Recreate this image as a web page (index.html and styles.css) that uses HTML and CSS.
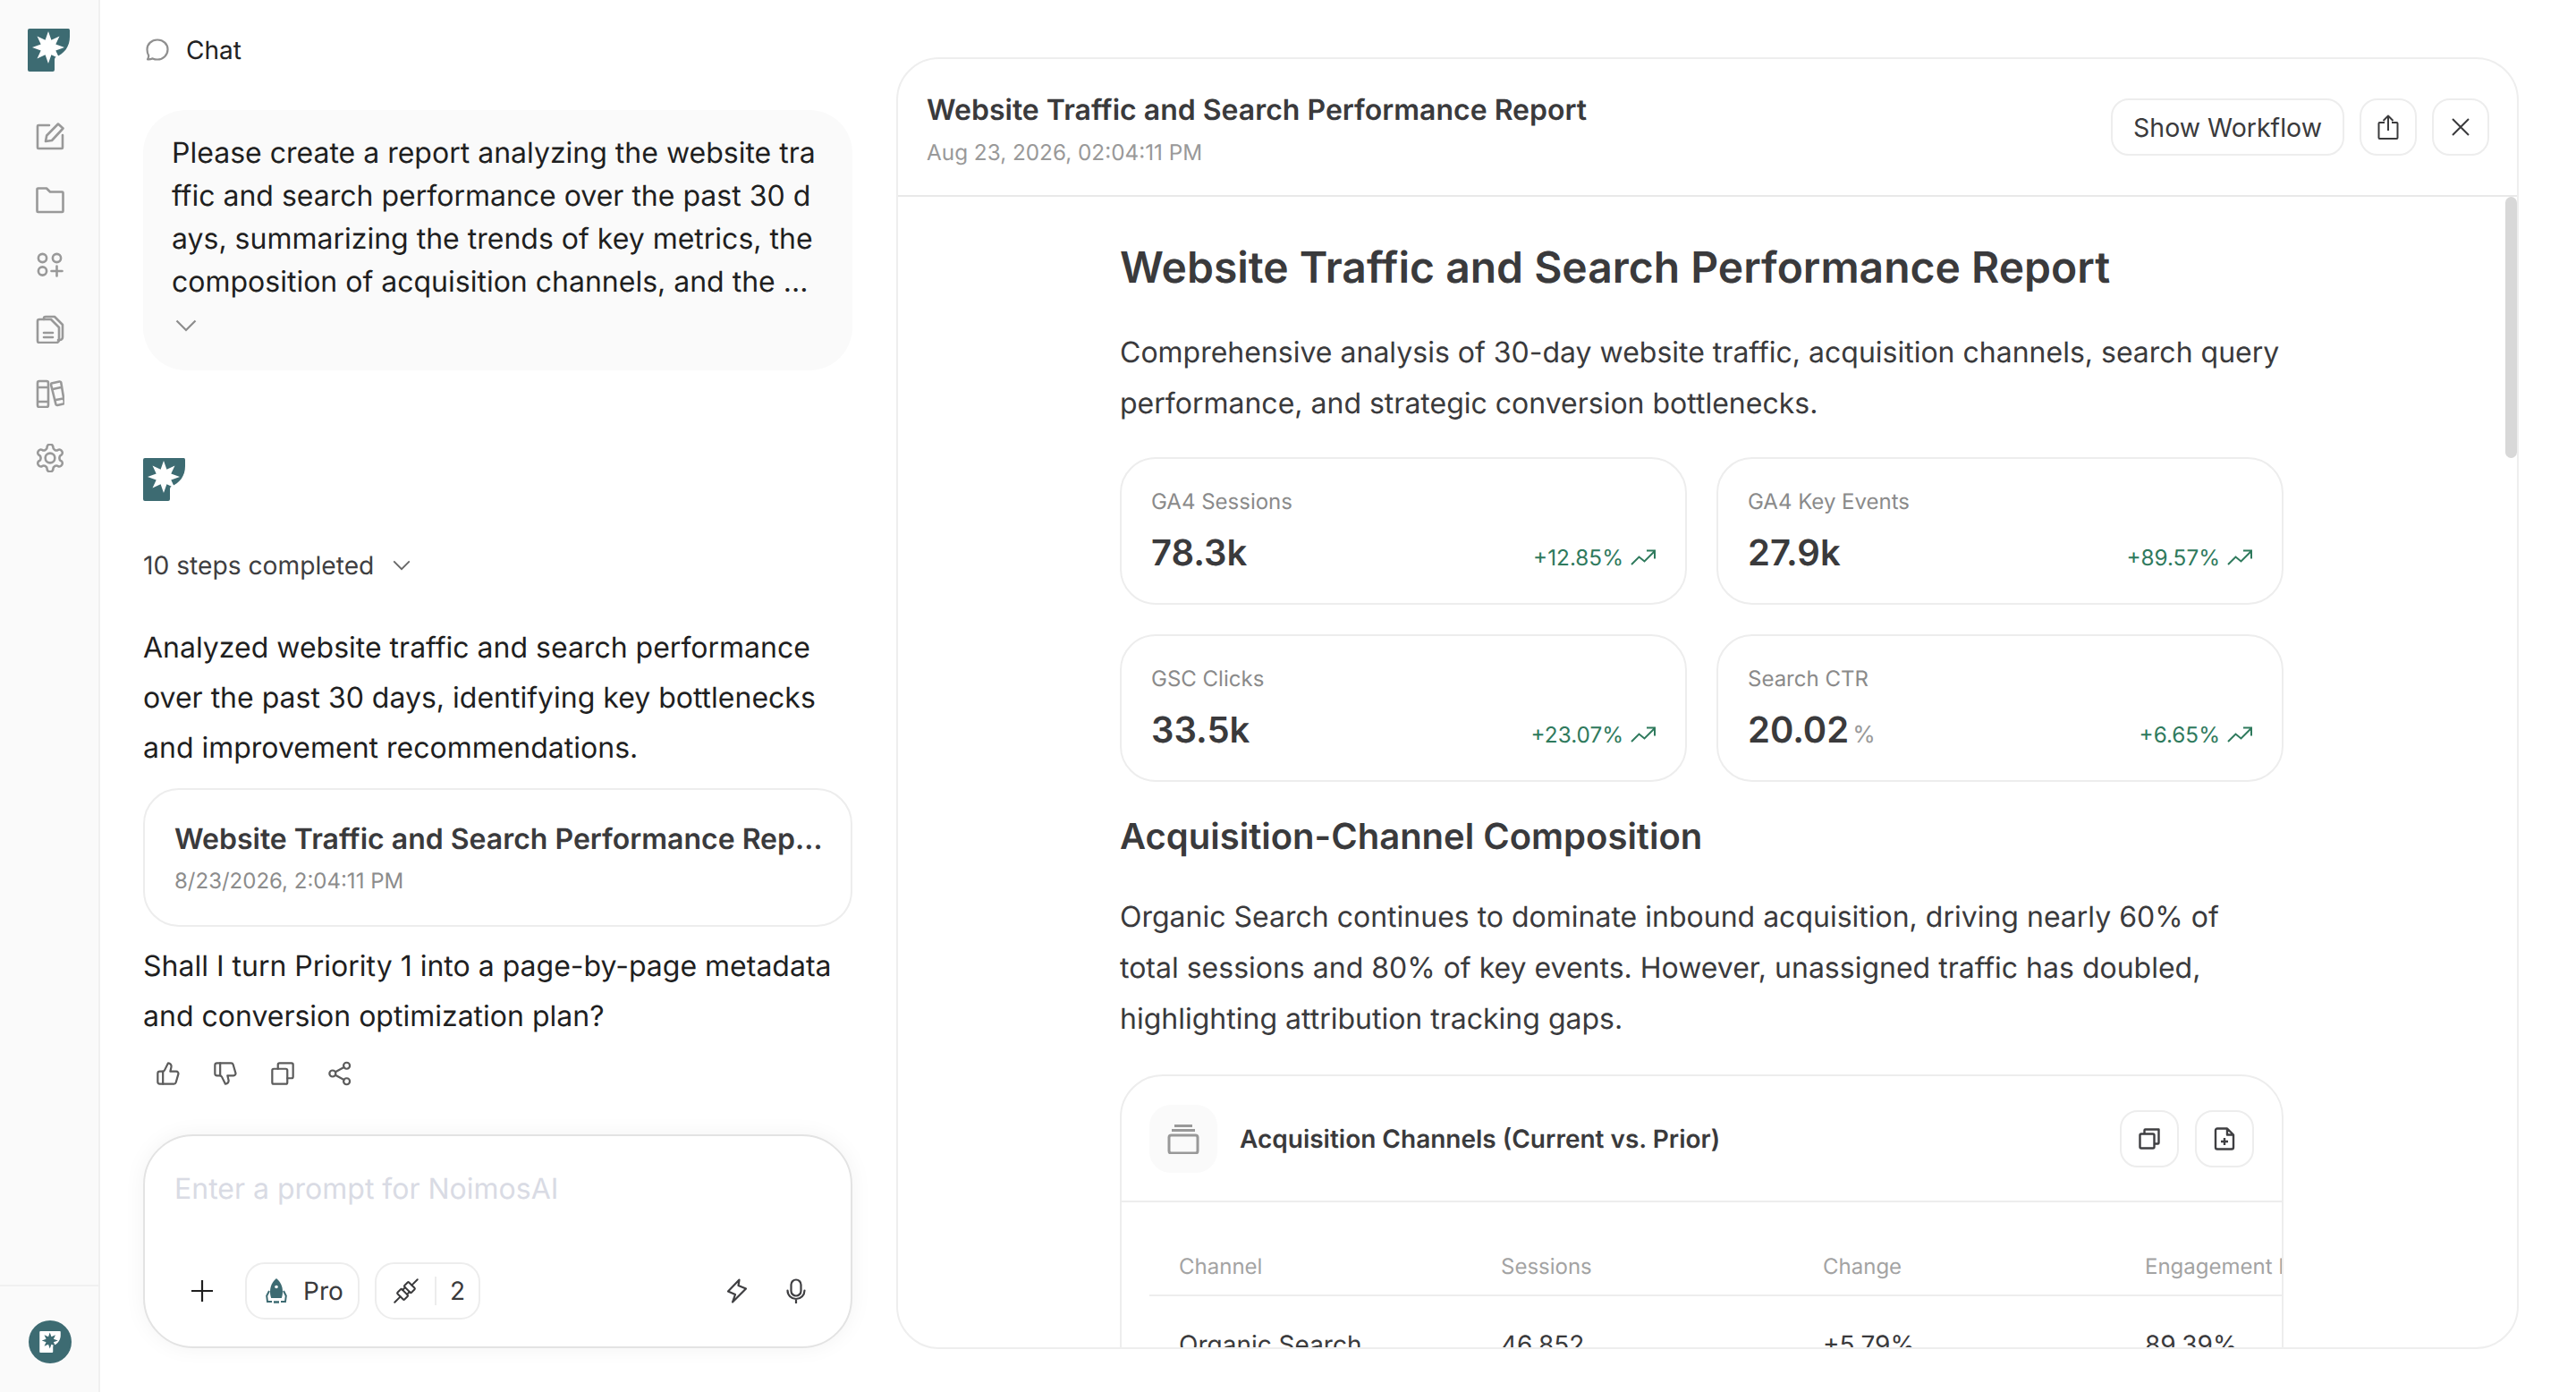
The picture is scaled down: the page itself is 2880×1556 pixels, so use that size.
FILE: index.html
```html
<!DOCTYPE html>
<html lang="en">
<head>
<meta charset="utf-8">
<title>NoimosAI Chat</title>
<link rel="stylesheet" href="styles.css">
</head>
<body>
<svg class="defs" width="0" height="0" aria-hidden="true">
  <defs>
    <symbol id="logo" viewBox="0 0 47 48">
      <path d="M2 0H45.500Q47 0 47 2V9C47 20 41 28 31 32Q30 33 30 35V46Q30 48 28 48H2Q0 48 0 46V2Q0 0 2 0Z" fill="currentColor"/>
      <polygon transform="translate(23 21)" fill="#fff" points="18,0 8.300,3.400 12.500,12.500 3.400,8.300 0,18 -3.400,8.300 -12.500,12.500 -8.300,3.400 -18,0 -8.300,-3.400 -12.500,-12.500 -3.400,-8.300 0,-18 3.400,-8.300 12.500,-12.500 8.300,-3.400"/>
    </symbol>
    <symbol id="trend" viewBox="0 0 28 18">
      <path d="M1 17 9.500 8.500 15.500 13.500 27 2M18 1.500H27V10.500" fill="none" stroke="currentColor" stroke-width="2"/>
    </symbol>
    <symbol id="chev" viewBox="0 0 24 14">
      <path d="M1.500 1.500 12 12 22.500 1.500" fill="none" stroke="currentColor" stroke-width="2.200"/>
    </symbol>
  </defs>
</svg>
<div class="app">
  <aside class="rail">
    <svg class="rail-logo"><use href="#logo"/></svg>
    <nav class="rail-nav">
      <svg class="rail-icon" viewBox="0 0 32 32"><path d="M15 4H3a1 1 0 0 0-1 1v24a1 1 0 0 0 1 1h26a1 1 0 0 0 1-1V15"/><path d="M11 22l1.200-6.500L25 2.500l5.500 5L18 21z"/></svg>
      <svg class="rail-icon" viewBox="0 0 32 32"><path d="M1.500 6.500a1 1 0 0 1 1-1H12l4 4h13.500a1 1 0 0 1 1 1V31a1 1 0 0 1-1 1h-27a1 1 0 0 1-1-1z" transform="translate(0 -3)"/></svg>
      <svg class="rail-icon" viewBox="0 0 32 32"><circle cx="7.500" cy="8.500" r="4.600"/><circle cx="23.500" cy="8.500" r="4.600"/><circle cx="7.500" cy="23" r="4.600"/><path d="M23.500 17.500v11M17.500 23h12"/></svg>
      <svg class="rail-icon" viewBox="0 0 32 32"><path d="M9 5V4a2 2 0 0 1 2-2h10l9 9v14a3 3 0 0 1-3 3h-2"/><path d="M4 5h13l9 9v14a3 3 0 0 1-3 3H4a2 2 0 0 1-2-2V7a2 2 0 0 1 2-2zM9 20h10M9 25h10"/></svg>
      <svg class="rail-icon" viewBox="0 0 32 32"><path d="M2 4a2 2 0 0 1 2-2h8a2 2 0 0 1 2 2v25a2 2 0 0 1-2 2H4a2 2 0 0 1-2-2zM2 9h12M2 25h12"/><path d="M17.500 4.500l9-2a1.500 1.500 0 0 1 1.800 1.200l3.600 22a1.500 1.500 0 0 1-1.200 1.800l-6.500 1.500a1.500 1.500 0 0 1-1.800-1.200L17 6zM19 11l9-2M22.500 23l8-1.500"/></svg>
      <svg class="rail-icon" viewBox="1.500 1.500 21 21"><g stroke-width="1.700"><path d="M12.220 2h-.44a2 2 0 0 0-2 2v.18a2 2 0 0 1-1 1.730l-.43.250a2 2 0 0 1-2 0l-.15-.08a2 2 0 0 0-2.730.730l-.22.380a2 2 0 0 0 .730 2.730l.15.100a2 2 0 0 1 1 1.720v.510a2 2 0 0 1-1 1.740l-.15.090a2 2 0 0 0-.730 2.730l.22.380a2 2 0 0 0 2.730.730l.15-.08a2 2 0 0 1 2 0l.43.250a2 2 0 0 1 1 1.730V20a2 2 0 0 0 2 2h.44a2 2 0 0 0 2-2v-.18a2 2 0 0 1 1-1.730l.43-.25a2 2 0 0 1 2 0l.15.080a2 2 0 0 0 2.730-.730l.22-.39a2 2 0 0 0-.730-2.730l-.15-.08a2 2 0 0 1-1-1.740v-.5a2 2 0 0 1 1-1.740l.15-.09a2 2 0 0 0 .730-2.730l-.22-.38a2 2 0 0 0-2.730-.730l-.15.080a2 2 0 0 1-2 0l-.43-.25a2 2 0 0 1-1-1.730V4a2 2 0 0 0-2-2z"/><circle cx="12" cy="12" r="3.500"/></g></svg>
    </nav>
    <div class="rail-foot">
      <div class="avatar"><svg class="avatar-logo" viewBox="0 0 47 48"><path d="M2 0H45.500Q47 0 47 2V9C47 20 41 28 31 32Q30 33 30 35V46Q30 48 28 48H2Q0 48 0 46V2Q0 0 2 0Z" fill="#fff"/><polygon transform="translate(23 21)" fill="#3d6b72" points="18,0 8.300,3.400 12.500,12.500 3.400,8.300 0,18 -3.400,8.300 -12.500,12.500 -8.300,3.400 -18,0 -8.300,-3.400 -12.500,-12.500 -3.400,-8.300 0,-18 3.400,-8.300 12.500,-12.500 8.300,-3.400"/></svg></div>
    </div>
  </aside>

  <section class="chat">
    <header class="chat-head">
      <svg class="chat-head-icon" viewBox="0 0 26 26"><path d="M13 1.500c6.600 0 11.500 4.700 11.500 10.800S19.600 23.500 13 23.500c-2 0-3.800-.4-5.300-1.100-1.800.7-3.700 1.100-5.700.9.800-1.300 1.300-2.800 1.200-4.100C1.900 17.100 1.500 14.700 1.500 12.300 1.500 6.200 6.400 1.500 13 1.500z"/></svg>
      <span>Chat</span>
    </header>
    <div class="bubble">
      <p class="bubble-text">Please create a report analyzing the website traffic and search performance over the past 30 days, summarizing the trends of key metrics, the composition of acquisition channels, and the ...</p>
      <svg class="bubble-chev"><use href="#chev"/></svg>
    </div>
    <svg class="answer-logo"><use href="#logo"/></svg>
    <div class="steps"><span>10 steps completed</span><svg class="steps-chev"><use href="#chev"/></svg></div>
    <p class="answer">Analyzed website traffic and search performance over the past 30 days, identifying key bottlenecks and improvement recommendations.</p>
    <div class="artifact">
      <div class="artifact-title">Website Traffic and Search Performance Report</div>
      <div class="artifact-date">8/23/2026, 2:04:11 PM</div>
    </div>
    <p class="answer follow">Shall I turn Priority 1 into a page-by-page metadata and conversion optimization plan?</p>
    <div class="actions">
      <svg class="action" viewBox="0 0 24 24"><path d="M7 10v12"/><path d="M15 5.880 14 10h5.830a2 2 0 0 1 1.920 2.560l-2.330 8A2 2 0 0 1 17.500 22H4a2 2 0 0 1-2-2v-8a2 2 0 0 1 2-2h2.760a2 2 0 0 0 1.790-1.110L12 2a3.130 3.130 0 0 1 3 3.880Z"/></svg>
      <svg class="action" viewBox="0 0 24 24"><path d="M7 14V2"/><path d="M15 18.120 14 14h5.830a2 2 0 0 0 1.920-2.560l-2.330-8A2 2 0 0 0 17.500 2H4a2 2 0 0 0-2 2v8a2 2 0 0 0 2 2h2.760a2 2 0 0 1 1.790 1.110L12 22a3.130 3.130 0 0 0 3-3.880Z"/></svg>
      <svg class="action" viewBox="0 0 24 24"><rect x="2" y="7.500" width="14.500" height="14.500" rx="1.500"/><path d="M7.500 7.500V3.500A1.500 1.500 0 0 1 9 2h11.500A1.500 1.500 0 0 1 22 3.500V15a1.500 1.500 0 0 1-1.500 1.500h-4"/></svg>
      <svg class="action" viewBox="0 0 24 24"><circle cx="18.500" cy="4.500" r="3"/><circle cx="5" cy="12" r="3"/><circle cx="18.500" cy="19.500" r="3"/><path d="M7.700 13.500l8.200 4.500M15.900 6l-8.200 4.500"/></svg>
    </div>
    <div class="composer">
      <div class="placeholder">Enter a prompt for NoimosAI</div>
      <div class="composer-bar">
        <svg class="plus" viewBox="0 0 24 24"><path d="M12 0v24M0 12h24"/></svg>
        <div class="chip chip-pro">
          <svg class="rocket" viewBox="0 0 24 28"><path d="M12 0C7.500 3.500 5 9 5 15c0 2.600.5 5 1.200 7h11.600c.7-2 1.200-4.400 1.200-7 0-6-2.500-11.500-7-15z" fill="#3d6b72"/><circle cx="12" cy="9.500" r="1.800" fill="#fff"/><path d="M4 14 1.200 19.500 2 26h5M20 14l2.800 5.500L22 26h-5" fill="none" stroke="#3d6b72" stroke-width="2"/><path d="M9 26.500h6" stroke="#3d6b72" stroke-width="2.500"/></svg>
          <span>Pro</span>
        </div>
        <div class="chip chip-tools">
          <svg class="plug" viewBox="0 0 28 28"><g transform="rotate(-45 14 14)"><path d="M-4 14H5M23 14h9M12 10.500h4M12 17.500h4"/><rect x="5" y="8.500" width="7" height="11" rx="1"/><rect x="16" y="8.500" width="7" height="11" rx="1"/></g></svg>
          <i class="chip-sep"></i>
          <span>2</span>
        </div>
        <div class="composer-right">
          <svg class="bolt" viewBox="0 0 24 28"><path d="M14.500 1.500 2 14.500l8 3.500-3 8.500 15-15-8.500-3.500z"/></svg>
          <svg class="mic" viewBox="0 0 22 28"><rect x="5.500" y="1.500" width="11" height="18" rx="5.500"/><path d="M1.500 13.500a9.500 9.500 0 0 0 19 0M11 23v5"/></svg>
        </div>
      </div>
    </div>
  </section>

  <section class="panel">
    <header class="panel-head">
      <div class="panel-titles">
        <div class="panel-title">Website Traffic and Search Performance Report</div>
        <div class="panel-date">Aug 23, 2026, 02:04:11 PM</div>
      </div>
      <div class="panel-tools">
        <button class="btn btn-text">Show Workflow</button>
        <button class="btn btn-square"><svg class="tool-icon" viewBox="0 0 24 28"><path d="M8 9H2.500a1 1 0 0 0-1 1v16a1 1 0 0 0 1 1h19a1 1 0 0 0 1-1V10a1 1 0 0 0-1-1H16M12 18V1.500M6.500 7 12 1.500 17.500 7"/></svg></button>
        <button class="btn btn-square"><svg class="tool-icon tool-close" viewBox="0 0 20 20"><path d="M1 1l18 18M19 1 1 19"/></svg></button>
      </div>
    </header>
    <div class="panel-body">
      <article class="report">
        <h1>Website Traffic and Search Performance Report</h1>
        <p class="lead">Comprehensive analysis of 30-day website traffic, acquisition channels, search query performance, and strategic conversion bottlenecks.</p>
        <div class="metrics">
          <div class="metric"><div class="metric-label">GA4 Sessions</div><div class="metric-row"><div class="metric-value">78.3k</div><div class="metric-change">+12.85%<svg class="trend"><use href="#trend"/></svg></div></div></div>
          <div class="metric"><div class="metric-label">GA4 Key Events</div><div class="metric-row"><div class="metric-value">27.9k</div><div class="metric-change">+89.57%<svg class="trend"><use href="#trend"/></svg></div></div></div>
          <div class="metric"><div class="metric-label">GSC Clicks</div><div class="metric-row"><div class="metric-value">33.5k</div><div class="metric-change">+23.07%<svg class="trend"><use href="#trend"/></svg></div></div></div>
          <div class="metric"><div class="metric-label">Search CTR</div><div class="metric-row"><div class="metric-value">20.02<small>%</small></div><div class="metric-change">+6.65%<svg class="trend"><use href="#trend"/></svg></div></div></div>
        </div>
        <h2>Acquisition-Channel Composition</h2>
        <p class="lead">Organic Search continues to dominate inbound acquisition, driving nearly 60% of total sessions and 80% of key events. However, unassigned traffic has doubled, highlighting attribution tracking gaps.</p>
        <div class="table-card">
          <div class="table-head">
            <div class="table-icon"><svg viewBox="0 0 36 34"><path d="M8 2.500h20M5 7.500h26" stroke-width="3"/><rect x="2" y="13" width="32" height="20" rx="2.500" stroke-width="3"/></svg></div>
            <div class="table-title">Acquisition Channels (Current vs. Prior)</div>
            <div class="table-tools">
              <button class="btn btn-small"><svg class="small-icon" viewBox="0 0 24 24"><rect x="1.500" y="6.500" width="16" height="16" rx="1.500"/><path d="M6.500 6.500V2.500a1 1 0 0 1 1-1h15v15a1 1 0 0 1-1 1h-4"/></svg></button>
              <button class="btn btn-small"><svg class="small-icon" viewBox="0 0 24 26"><path d="M15 1.500H4a2 2 0 0 0-2 2v19a2 2 0 0 0 2 2h16a2 2 0 0 0 2-2V8.500zM15 1.500v7h7M12 12v8M8 16h8"/></svg></button>
            </div>
          </div>
          <div class="table-wrap">
            <table>
              <thead><tr><th>Channel</th><th>Sessions</th><th>Change</th><th>Engagement Rate</th></tr></thead>
              <tbody><tr><td>Organic Search</td><td>46,852</td><td>+5.79%</td><td>89.39%</td></tr></tbody>
            </table>
          </div>
        </div>
      </article>
      <div class="scrollbar"></div>
    </div>
  </section>
</div>
</body>
</html>
```
FILE: styles.css
```css
* { box-sizing: border-box; }
html, body { margin: 0; height: 100%; background: #fff; }
body { font-family: Inter, "Liberation Sans", sans-serif; color: #1d1d1f; overflow: hidden; text-rendering: geometricPrecision; }
svg { display: block; flex: none; }
.defs { position: absolute; }
p, h1, h2 { margin: 0; }
.app { display: flex; height: 1556px; }

.rail { width: 112px; flex: none; background: #fafafa; border-right: 2px solid #f0f0f0; display: flex; flex-direction: column; align-items: center; padding-top: 32px; }
.rail-logo { width: 47px; height: 48px; color: #3d6b72; margin-right: 1px; }
.rail-nav { display: flex; flex-direction: column; gap: 40px; margin: 56px 0 0 2px; }
.rail-icon { width: 32px; height: 32px; fill: none; stroke: #999; stroke-width: 2.600; stroke-linejoin: round; stroke-linecap: round; }
.rail-foot { margin-top: auto; width: 100%; height: 120px; border-top: 2px solid #f0f0f0; padding: 38px 0 0 2px; display: flex; justify-content: center; }
.avatar { width: 48px; height: 48px; border-radius: 50%; background: #3d6b72; display: flex; align-items: center; justify-content: center; }
.avatar-logo { width: 24px; height: 24px; }

.chat { width: 793px; flex: none; margin-left: 48px; display: flex; flex-direction: column; }
.chat-head { height: 40px; margin-top: 36px; display: flex; align-items: center; gap: 19px; padding-left: 3px; font-size: 28px; color: #222; }
.chat-head-icon { width: 26px; height: 26px; fill: none; stroke: #8f8f8f; stroke-width: 2.200; stroke-linejoin: round; }
.bubble { margin-top: 47px; height: 291px; background: #fafafa; border-radius: 48px; padding: 24px 32px 0 32px; }
.bubble-text { font-size: 32px; line-height: 48px; color: #1f1f1f; word-break: break-all; }
.bubble-chev { width: 24px; height: 14px; color: #8c8c8c; margin: 18px 0 0 4px; }
.answer-logo { width: 47px; height: 48px; color: #3d6b72; margin-top: 98px; }
.steps { display: flex; align-items: center; gap: 21px; height: 40px; margin-top: 52px; font-size: 28.200px; color: #3f3f42; }
.steps-chev { width: 20px; height: 12px; color: #666; }
.answer { margin-top: 44px; font-size: 32px; line-height: 56px; color: #1f1f1f; }
.artifact { margin-top: 17px; height: 155px; border: 2px solid #ededed; border-radius: 40px; padding: 0 30px 0 33px; display: flex; flex-direction: column; justify-content: center; gap: 7px; }
.artifact-title { font-size: 32px; font-weight: 600; color: #3a3a3c; line-height: 46px; white-space: nowrap; overflow: hidden; text-overflow: ellipsis; }
.artifact-date { font-size: 24px; color: #8c8c8c; line-height: 34px; }
.follow { margin-top: 16px; }
.actions { display: flex; gap: 36px; margin-top: 22px; padding-left: 14px; }
.action { width: 28px; height: 28px; fill: none; stroke: #5c5c5c; stroke-width: 1.900; stroke-linejoin: round; stroke-linecap: round; }
.composer { margin-top: 54px; height: 239px; border: 2px solid #e3e3e3; border-radius: 56px; box-shadow: 0 0 24px rgba(0, 0, 0, .05); padding: 0 50px 30px 33px; display: flex; flex-direction: column; background: #fff; }
.placeholder { margin-top: 39px; font-size: 32px; line-height: 40px; color: #d9dbe4; }
.composer-bar { margin-top: auto; display: flex; align-items: center; height: 64px; }
.plus { width: 24px; height: 24px; stroke: #1f1f1f; stroke-width: 2.200; margin-left: 19px; }
.chip { height: 64px; border: 2px solid #ededed; border-radius: 22px; display: flex; align-items: center; font-size: 28px; color: #3a3a3c; }
.chip-pro { width: 128px; margin-left: 36px; padding-left: 21px; gap: 18px; }
.chip-tools { width: 118px; margin-left: 17px; padding-left: 19px; }
.rocket { width: 24px; height: 28px; }
.plug { width: 28px; height: 28px; fill: none; stroke: #3a3a3c; stroke-width: 2; stroke-linejoin: round; stroke-linecap: round; overflow: hidden; }
.chip-sep { width: 2px; height: 32px; background: #ececec; margin: 0 15px 0 18px; }
.composer-right { margin-left: auto; display: flex; align-items: center; gap: 43px; }
.bolt { width: 24px; height: 28px; fill: none; stroke: #3f3f42; stroke-width: 2.200; stroke-linejoin: round; }
.mic { width: 22px; height: 28px; fill: none; stroke: #3f3f42; stroke-width: 2.200; stroke-linecap: round; }

.panel { width: 1814px; flex: none; margin: 64px 0 48px 49px; height: 1444px; border: 2px solid #eeeeee; border-radius: 48px; display: flex; flex-direction: column; overflow: hidden; }
.panel-head { height: 154px; flex: none; border-bottom: 2px solid #e9e9e9; display: flex; align-items: center; justify-content: space-between; padding: 0 31px 0 32px; }
.panel-titles { padding-top: 3px; }
.panel-title { font-size: 32px; font-weight: 600; color: #3a3a3c; line-height: 44px; }
.panel-date { font-size: 24.300px; color: #999; line-height: 34px; margin-top: 8px; }
.panel-tools { display: flex; gap: 17px; }
.btn { background: #fff; border: 2px solid #ededed; border-radius: 20px; height: 64px; display: flex; align-items: center; justify-content: center; padding: 0; font-family: inherit; color: #3a3a3c; }
.btn-text { width: 261px; font-size: 28.500px; }
.btn-square { width: 64px; }
.tool-icon { width: 24px; height: 28px; fill: none; stroke: #3a3a3c; stroke-width: 2; stroke-linejoin: round; }
.tool-close { width: 20px; height: 20px; }
.panel-body { position: relative; flex: 1; min-height: 0; overflow: hidden; }
.report { width: 1301px; margin: 0 0 0 248px; padding-top: 46px; }
h1 { font-size: 48px; font-weight: 600; line-height: 66px; color: #3a3a3c; }
.lead { font-size: 32px; line-height: 57px; color: #3a3a3c; }
h1 + .lead { margin-top: 33px; }
.metrics { display: grid; grid-template-columns: 634px 634px; gap: 33px; margin-top: 32px; }
.metric { height: 165px; border: 2px solid #ededed; border-radius: 40px; padding: 31px 33px 0 33px; }
.metric-label { font-size: 24px; line-height: 34px; color: #8a8a8a; }
.metric-row { display: flex; align-items: center; justify-content: space-between; margin-top: 12px; height: 56px; }
.metric-value { font-size: 40px; font-weight: 600; line-height: 56px; color: #3a3a3c; }
.metric-value small { font-size: 26px; line-height: 1; font-weight: 400; color: #999; margin-left: 4px; }
.metric-change { display: flex; align-items: center; gap: 8px; font-size: 24.300px; color: #2f7a5d; padding-top: 10px; }
.trend { width: 28px; height: 18px; }
h2 { font-size: 40px; font-weight: 600; line-height: 56px; color: #3a3a3c; margin-top: 33px; }
h2 + .lead { margin-top: 33px; }
.table-card { margin-top: 34px; border: 2px solid #ededed; border-radius: 48px; height: 400px; overflow: hidden; }
.table-head { height: 141px; border-bottom: 2px solid #ededed; display: flex; align-items: center; padding: 0 31px 0 31px; }
.table-icon { width: 76px; height: 76px; border-radius: 24px; background: #fafafa; display: flex; align-items: center; justify-content: center; }
.table-icon svg { width: 36px; height: 34px; fill: none; stroke: #999; }
.table-title { margin-left: 25px; font-size: 28px; font-weight: 600; color: #3a3a3c; }
.table-tools { margin-left: auto; display: flex; gap: 18px; }
.btn-small { width: 66px; height: 64px; }
.small-icon { width: 24px; height: 26px; fill: none; stroke: #3f3f42; stroke-width: 2.400; stroke-linejoin: round; }
.table-wrap { margin-left: 31px; overflow: hidden; padding-top: 40px; }
table { border-collapse: collapse; table-layout: fixed; width: 1440px; }
th, td { width: 360px; text-align: left; padding: 0 33px; white-space: nowrap; font-weight: 400; }
th { font-size: 24px; color: #a3a3a3; height: 64px; border-bottom: 2px solid #ededed; }
td { font-size: 28px; color: #3a3a3c; height: 108px; }
.scrollbar { position: absolute; top: 0; right: 0; width: 13px; height: 292px; border-radius: 7px; background: #d8d8d8; }
```
